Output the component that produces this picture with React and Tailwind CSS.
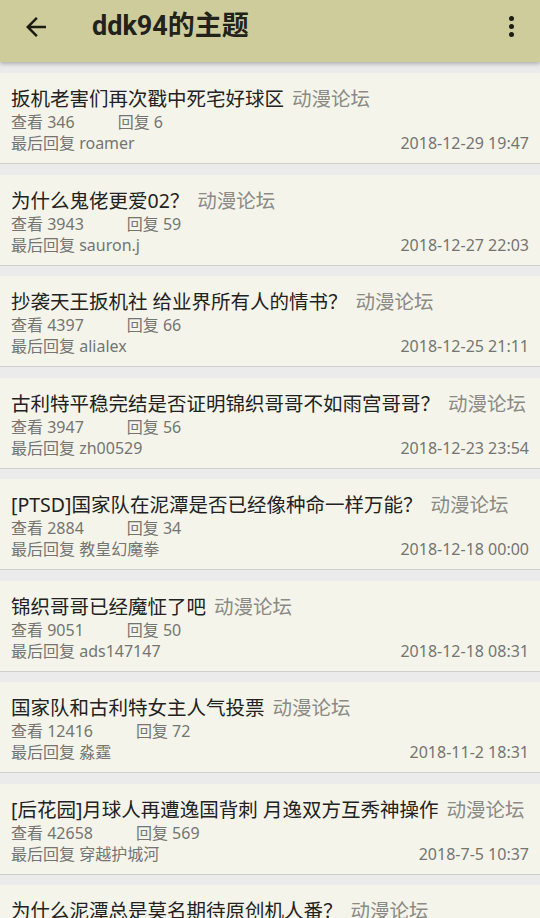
import React from 'react';

const posts = [
  { title: '扳机老害们再次戳中死宅好球区', views: 346, replies: 6, last: 'roamer', time: '2018-12-29 19:47' },
  { title: '为什么鬼佬更爱02？', views: 3943, replies: 59, last: 'sauron.j', time: '2018-12-27 22:03' },
  { title: '抄袭天王扳机社 给业界所有人的情书？', views: 4397, replies: 66, last: 'alialex', time: '2018-12-25 21:11' },
  { title: '古利特平稳完结是否证明锦织哥哥不如雨宫哥哥？', views: 3947, replies: 56, last: 'zh00529', time: '2018-12-23 23:54' },
  { title: '[PTSD]国家队在泥潭是否已经像种命一样万能？', views: 2884, replies: 34, last: '教皇幻魔拳', time: '2018-12-18 00:00' },
  { title: '锦织哥哥已经魔怔了吧', views: 9051, replies: 50, last: 'ads147147', time: '2018-12-18 08:31' },
  { title: '国家队和古利特女主人气投票', views: 12416, replies: 72, last: '淼霆', time: '2018-11-2 18:31' },
  { title: '[后花园]月球人再遭逸国背刺 月逸双方互秀神操作', views: 42658, replies: 569, last: '穿越护城河', time: '2018-7-5 10:37' },
  { title: '为什么泥潭总是莫名期待原创机人番？', views: 5120, replies: 41, last: 'roamer', time: '2018-6-30 12:00' },
];

function PostCard({ post }) {
  return (
    <div className="bg-[#f4f4ea] border-b-[1.5px] border-[#cfcfcb] px-[11px] pt-[12px] pb-[9px]">
      <div className="text-[19.5px] leading-[27px] text-[#222] whitespace-nowrap">
        {post.title}
        <span className="ml-[8px] text-[#8a8a86]">动漫论坛</span>
      </div>
      <div className="flex text-[16px] leading-[21px] text-[#747472]">
        <span>查看 {post.views}</span>
        <span className="ml-[43px]">回复 {post.replies}</span>
      </div>
      <div className="flex justify-between text-[16px] leading-[21px] text-[#747472]">
        <span>最后回复 {post.last}</span>
        <span>{post.time}</span>
      </div>
    </div>
  );
}

export default function App() {
  return (
    <div
      className="w-[540px] h-[918px] overflow-hidden bg-[#ebebeb] flex flex-col"
      style={{ fontFamily: '"Noto Sans", "Noto Sans CJK SC", sans-serif' }}
    >
      <header className="relative z-10 h-[62px] shrink-0 bg-[#cdcc9a] flex items-center px-[21px] pb-[9px] shadow-[0_2px_4px_rgba(0,0,0,0.25)]">
        <svg width="30" height="30" viewBox="0 0 24 24" className="text-[#1c1c14]">
          <path d="M20 11H7.83l5.59-5.59L12 4l-8 8 8 8 1.41-1.41L7.83 13H20v-2z" fill="currentColor" />
        </svg>
        <h1
          className="ml-[41px] text-[27px] font-bold text-[#22221a]"
          style={{ fontFamily: 'Roboto, "Noto Sans CJK SC", sans-serif' }}
        >
          ddk94的主题
        </h1>
        <div className="ml-auto mr-[5.5px] flex flex-col gap-[3px]">
          <span className="w-[5px] h-[5px] rounded-full bg-[#1c1c14]" />
          <span className="w-[5px] h-[5px] rounded-full bg-[#1c1c14]" />
          <span className="w-[5px] h-[5px] rounded-full bg-[#1c1c14]" />
        </div>
      </header>
      <div className="flex flex-col gap-[10.5px] pt-[11px]">
        {posts.map((p, i) => (
          <PostCard key={i} post={p} />
        ))}
      </div>
    </div>
  );
}
